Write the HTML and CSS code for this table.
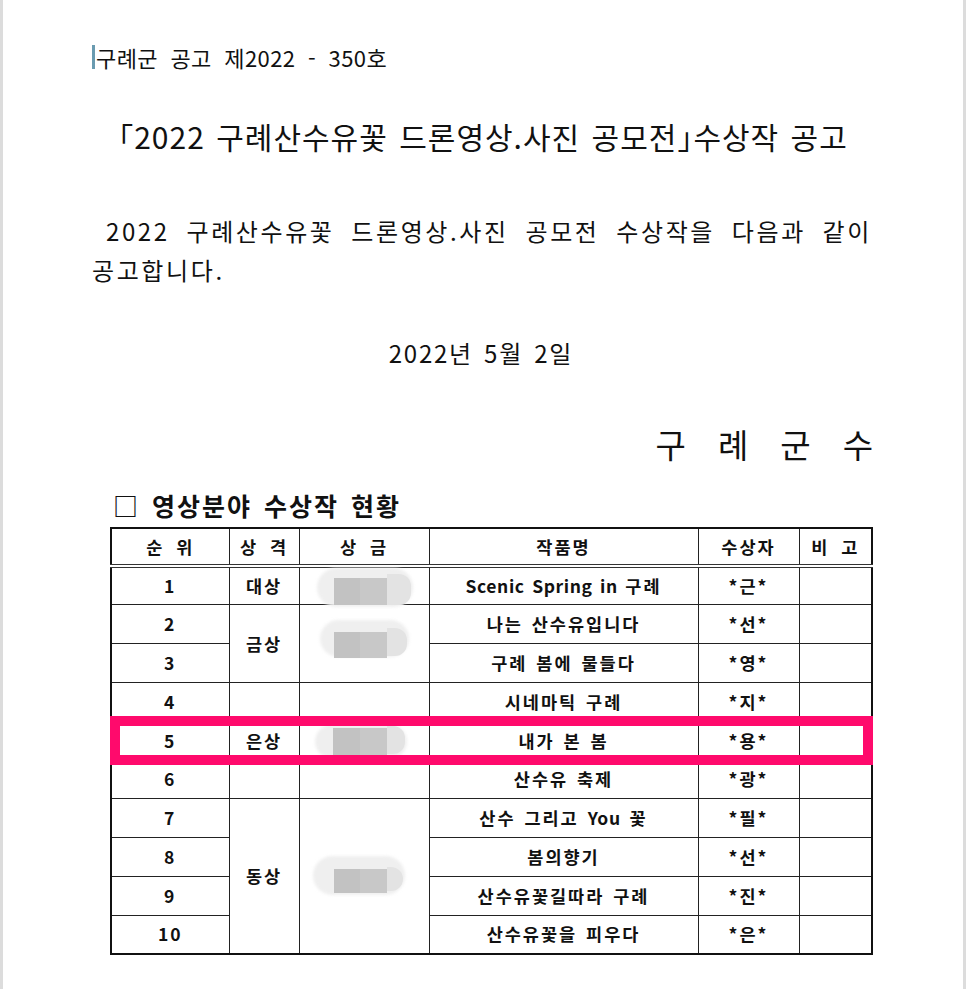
FILE: index.html
```html
<!DOCTYPE html>
<html lang="ko">
<head>
<meta charset="utf-8">
<title>구례군 공고</title>
<link rel="stylesheet" href="styles.css">
</head>
<body>
<div class="page">
  <div class="notice-no"><span class="caret"></span>구례군 공고 제2022 - 350호</div>
  <h1 class="title"><span class="br">「</span>2022 구례산수유꽃 드론영상.사진 공모전<span class="br">」</span>수상작 공고</h1>
  <div class="para">
    <div class="line justify"><span>2022</span><span>구례산수유꽃</span><span>드론영상.사진</span><span>공모전</span><span>수상작을</span><span>다음과</span><span>같이</span></div>
    <div class="line">공고합니다.</div>
  </div>
  <div class="date">2022년 5월 2일</div>
  <div class="sign">구례군수</div>
  <h2 class="section">□ 영상분야 수상작 현황</h2>
  <div class="table-wrap">
    <table class="awards">
      <colgroup>
        <col class="c1"><col class="c2"><col class="c3"><col class="c4"><col class="c5"><col class="c6">
      </colgroup>
      <thead>
        <tr><th>순 위</th><th>상 격</th><th>상 금</th><th>작품명</th><th>수상자</th><th>비 고</th></tr>
      </thead>
      <tbody>
        <tr><td>1</td><td>대상</td><td></td><td><span class="lat">Scenic Spring in </span>구례</td><td>*근*</td><td></td></tr>
        <tr><td>2</td><td rowspan="2">금상</td><td rowspan="2"></td><td>나는 산수유입니다</td><td>*선*</td><td></td></tr>
        <tr><td>3</td><td>구례 봄에 물들다</td><td>*영*</td><td></td></tr>
        <tr><td>4</td><td></td><td></td><td>시네마틱 구례</td><td>*지*</td><td></td></tr>
        <tr><td>5</td><td>은상</td><td></td><td>내가 본 봄</td><td>*용*</td><td></td></tr>
        <tr><td>6</td><td></td><td></td><td>산수유 축제</td><td>*광*</td><td></td></tr>
        <tr><td>7</td><td rowspan="4">동상</td><td rowspan="4"></td><td>산수 그리고 <span class="lat">You</span> 꽃</td><td>*필*</td><td></td></tr>
        <tr><td>8</td><td>봄의향기</td><td>*선*</td><td></td></tr>
        <tr><td>9</td><td>산수유꽃길따라 구례</td><td>*진*</td><td></td></tr>
        <tr><td>10</td><td>산수유꽃을 피우다</td><td>*은*</td><td></td></tr>
      </tbody>
    </table>
    <div class="blob b1"><div class="pill"></div><div class="dark"></div><div class="light"></div></div>
    <div class="blob b2"><div class="pill"></div><div class="dark"></div><div class="light"></div></div>
    <div class="blob b3"><div class="pill"></div><div class="dark"></div><div class="light"></div></div>
    <div class="blob b4"><div class="pill"></div><div class="dark"></div><div class="light"></div></div>
    <div class="highlight"></div>
  </div>
</div>
</body>
</html>
```

FILE: styles.css
```css
* { box-sizing: border-box; }
html, body { margin: 0; padding: 0; background: #fff; }
body {
  font-family: "Noto Sans CJK KR", "Noto Sans", sans-serif;
  color: #111;
}
.page {
  width: 966px;
  height: 989px;
  border-left: 3px solid #dcdcdc;
  border-right: 3px solid #dcdcdc;
  padding: 42px 93px 0 89px;
  overflow: hidden;
}
.notice-no {
  font-size: 22px;
  line-height: 30px;
  height: 30px;
  word-spacing: 6px;
  letter-spacing: 0.4px;
  display: flex;
  align-items: center;
  white-space: pre;
}
.caret {
  display: inline-block;
  width: 3px;
  height: 24px;
  background: #6a9bb0;
  margin-right: 1px;
}
.title {
  margin: 44px 0 0;
  font-size: 30px;
  font-weight: 400;
  line-height: 40px;
  text-align: center;
  letter-spacing: 1px;
  word-spacing: 2px;
  padding-left: 4px;
}
.title .br { font-feature-settings: "halt"; }
.para {
  margin-top: 55px;
  font-size: 24px;
  line-height: 39px;
  letter-spacing: 2.6px;
}
.line { height: 39px; }
.justify {
  display: flex;
  justify-content: space-between;
  padding-left: 14px;
  margin-right: -2px;
}
.date {
  margin-top: 44px;
  font-size: 24px;
  line-height: 39px;
  text-align: center;
  letter-spacing: 1.7px;
  word-spacing: 3px;
}
.sign {
  margin-top: 50px;
  font-size: 33px;
  line-height: 44px;
  text-align: right;
  letter-spacing: 32px;
  margin-right: -35px;
}
.section {
  margin: 23px 0 0 21px;
  font-size: 25px;
  font-weight: 700;
  line-height: 32px;
  letter-spacing: 2px;
  word-spacing: 3px;
}
.table-wrap {
  position: relative;
  margin: 6px 0 0 18px;
  width: 763px;
}
.awards {
  border-collapse: collapse;
  table-layout: fixed;
  width: 761px;
  border: 2px solid #111;
  font-size: 17.5px;
  font-weight: 700;
  letter-spacing: 2px;
}
.c1 { width: 118px; }
.c2 { width: 70px; }
.c3 { width: 130px; }
.c4 { width: 269px; }
.c5 { width: 101px; }
.c6 { width: 73px; }
.awards th, .awards td {
  border: 1px solid #222;
  text-align: center;
  padding: 0;
  height: 38.8px;
  line-height: 20px;
  white-space: pre;
}
.awards th {
  font-weight: 700;
  height: 38px;
  border-bottom: 4px double #333;
  word-spacing: 5px;
}
.awards td { word-spacing: 2px; }
.awards .lat { letter-spacing: 0.6px; }

.blob { position: absolute; }
.blob .pill {
  position: absolute;
  inset: 0;
  border-radius: 20px;
  background: #efefef;
  filter: blur(1.5px);
}
.blob .dark {
  position: absolute;
  background: linear-gradient(to right, #c2c2c2 0 50%, #c8c8c8 50% 100%);
}
.blob .light {
  position: absolute;
  background: #e3e3e3;
  border-radius: 0 12px 12px 0;
  filter: blur(0.6px);
}
.b1 { left: 207px; top: 41px; width: 96px; height: 39px; }
.b1 .dark { left: 17px; top: 10px; width: 53px; height: 27px; }
.b1 .light { left: 70px; top: 6px; width: 24px; height: 31px; }
.b2 { left: 210px; top: 93px; width: 89px; height: 37px; }
.b2 .dark { left: 14px; top: 12px; width: 53px; height: 26px; }
.b2 .light { left: 67px; top: 8px; width: 20px; height: 28px; }
.b3 { left: 205px; top: 198px; width: 92px; height: 33px; }
.b3 .dark { left: 18px; top: 3px; width: 54px; height: 27px; }
.b3 .light { left: 72px; top: 1px; width: 18px; height: 28px; }
.b4 { left: 203px; top: 329px; width: 92px; height: 39px; }
.b4 .dark { left: 21px; top: 13px; width: 53px; height: 24px; }
.b4 .light { left: 74px; top: 11px; width: 16px; height: 24px; }

.highlight {
  position: absolute;
  left: 0;
  top: 189px;
  width: 763px;
  height: 49px;
  border: 10px solid #ff0a6c;
}
```
